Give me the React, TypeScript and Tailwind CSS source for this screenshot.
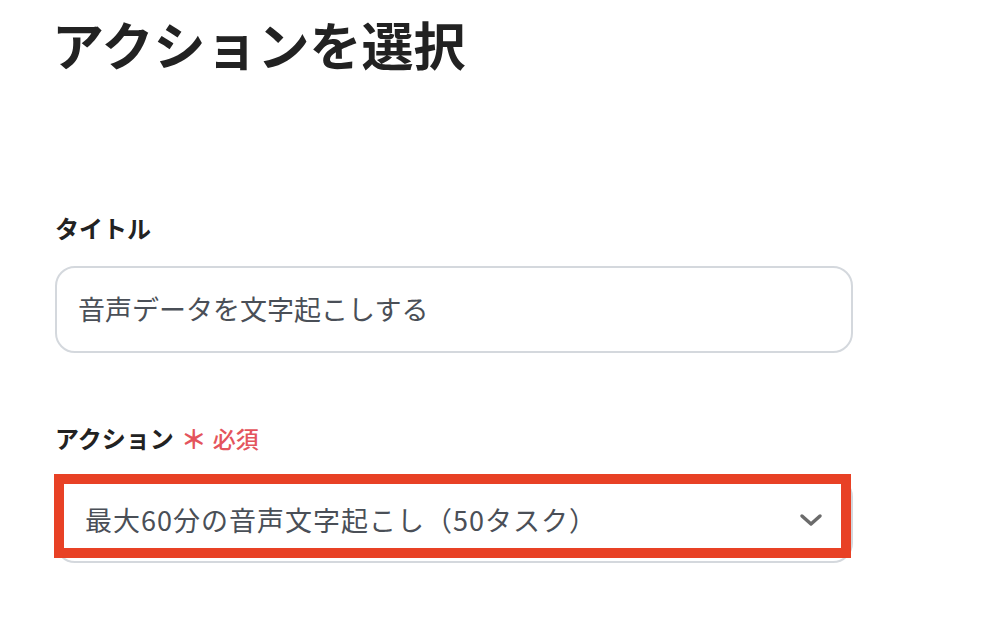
import React from "react";

const font = {
  fontFamily: '"Noto Sans CJK JP", "Noto Sans", sans-serif',
};

const App: React.FC = () => {
  return (
    <div className="min-h-screen w-full bg-white text-[#222]" style={font}>
      <div className="w-[798px] pl-[55px] pt-[8px] box-content">
        <h1 className="text-[52px] font-bold leading-[72px] tracking-[0px] -ml-[3px]">
          アクションを選択
        </h1>

        <div className="mt-[133px]">
          <label className="block text-[24px] font-bold leading-[30px]">
            タイトル
          </label>
          <div className="mt-[23px] flex h-[87px] items-center rounded-[20px] border-2 border-[#d4d8dd] px-[21px]">
            <span className="text-[27px] text-[#4a4f57]">
              音声データを文字起こしする
            </span>
          </div>
        </div>

        <div className="mt-[70px]">
          <label className="flex items-center text-[24px] font-bold leading-[30px]">
            アクション
            <span className="ml-[7px] text-[26px] font-bold text-[#e4545c]">＊</span>
            <span className="ml-[6px] text-[23px] font-medium text-[#e4545c]">必須</span>
          </label>
          <div className="relative mt-[24px]">
            <div className="flex h-[86px] items-center justify-between rounded-[20px] border-2 border-[#d4d8dd] pl-[28px] pr-[28px]">
              <span className="text-[27px] tracking-[1px] text-[#4a4f57]">
                最大60分の音声文字起こし（50タスク）
              </span>
              <svg
                width="24"
                height="14"
                viewBox="0 0 24 14"
                fill="none"
                stroke="#6b6b6b"
                strokeWidth="3.5"
                strokeLinecap="round"
                strokeLinejoin="round"
              >
                <path d="M3 3l9 8 9-8" />
              </svg>
            </div>
            <div className="pointer-events-none absolute left-[-1px] top-[-3px] h-[84px] w-[797px] border-[10px] border-[#e84125]" />
          </div>
        </div>
      </div>
    </div>
  );
};

export default App;
